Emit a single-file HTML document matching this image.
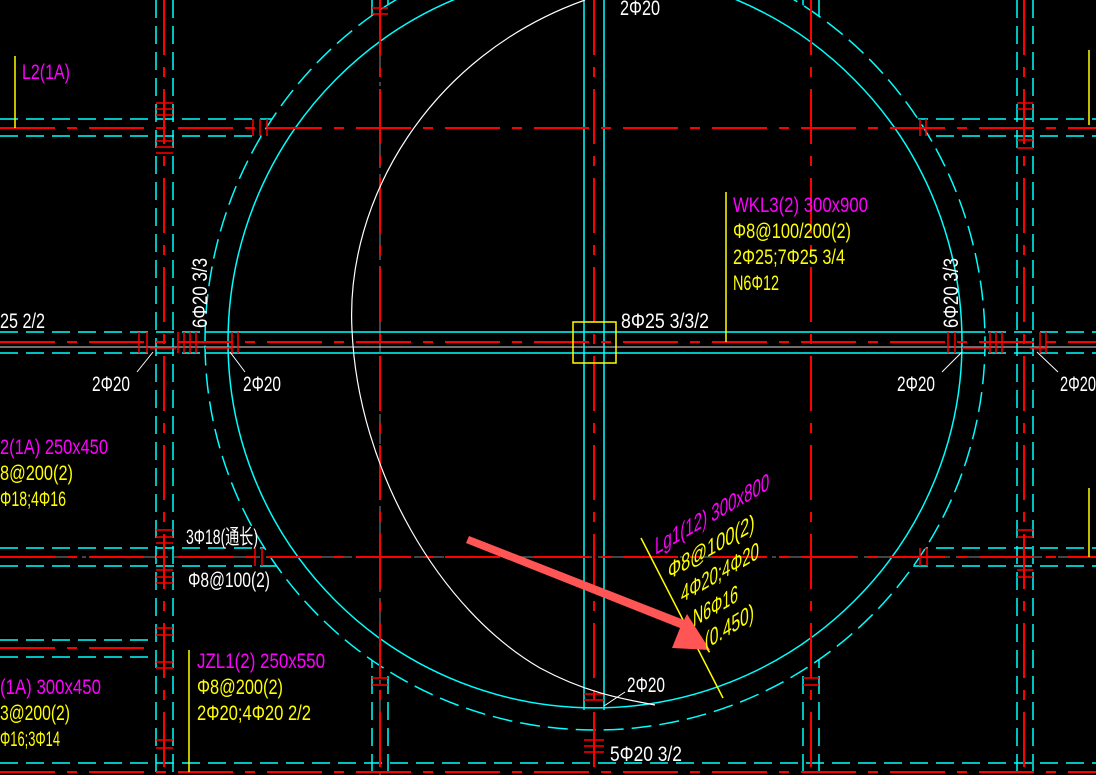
<!DOCTYPE html>
<html><head><meta charset="utf-8"><style>
html,body{margin:0;padding:0;background:#000;overflow:hidden}
svg{display:block}
text{font-family:"Liberation Sans Narrow","Liberation Sans",sans-serif;font-size:21px}
.w{fill:#fff}.y{fill:#ff0}.m{fill:#f0f}
</style></head><body>
<svg width="1096" height="775" viewBox="0 0 1096 775" xmlns="http://www.w3.org/2000/svg">
<rect width="1096" height="775" fill="#000"/>
<defs>
<clipPath id="outside"><path d="M0,0H1096V775H0Z M205,342 A390,398 0 0,1 985,342 A390,388 0 0,1 205,342Z" clip-rule="evenodd"/></clipPath>
</defs>
<g stroke="#888" stroke-width="1" stroke-dasharray="30,6,4,6">
<line x1="380" y1="0" x2="380" y2="775"/>
<line x1="0" y1="557" x2="1096" y2="557"/>
</g>
<line x1="0" y1="347" x2="1096" y2="347" stroke="#ddd" stroke-width="1"/>
<g stroke="#0ff" stroke-width="1.5" stroke-dasharray="18,8" fill="none" clip-path="url(#outside)">
<line x1="156" y1="0" x2="156" y2="775"/><line x1="173" y1="0" x2="173" y2="775"/>
<line x1="372" y1="0" x2="372" y2="775"/><line x1="388" y1="0" x2="388" y2="775"/>
<line x1="803" y1="0" x2="803" y2="775"/><line x1="819" y1="0" x2="819" y2="775"/>
<line x1="1017" y1="0" x2="1017" y2="775"/><line x1="1033" y1="0" x2="1033" y2="775"/>
<line x1="0" y1="119" x2="1096" y2="119"/><line x1="0" y1="136" x2="1096" y2="136"/>
<line x1="0" y1="548" x2="1096" y2="548"/><line x1="0" y1="566" x2="1096" y2="566"/>
<line x1="0" y1="763" x2="1096" y2="763"/>
<line x1="0" y1="640" x2="156" y2="640"/><line x1="0" y1="657" x2="156" y2="657"/>
<line x1="0" y1="332" x2="1096" y2="332"/><line x1="0" y1="353" x2="1096" y2="353"/>
</g>
<g stroke="#0ff" stroke-width="1.5">
<line x1="205" y1="332" x2="985" y2="332"/><line x1="205" y1="353" x2="985" y2="353"/>
<line x1="584" y1="0" x2="584" y2="710"/><line x1="604" y1="0" x2="604" y2="710"/>
</g>
<path d="M205,342 A390,398 0 0,1 985,342 A390,388 0 0,1 205,342Z" fill="none" stroke="#0ff" stroke-width="1.5" stroke-dasharray="20,8"/>
<path d="M228,342 A367,371 0 0,1 962,342 A367,366 0 0,1 228,342Z" fill="none" stroke="#0ff" stroke-width="1.5"/>
<g stroke="#f00" stroke-width="2" stroke-dasharray="55,12,10,12" fill="none">
<line x1="164" y1="0" x2="164" y2="775"/>
<line x1="380" y1="0" x2="380" y2="775"/>
<line x1="594" y1="0" x2="594" y2="775"/>
<line x1="811" y1="0" x2="811" y2="775"/>
<line x1="1024" y1="0" x2="1024" y2="775"/>
<line x1="0" y1="128" x2="1096" y2="128"/>
<line x1="0" y1="342" x2="1096" y2="342"/>
<line x1="0" y1="557" x2="1096" y2="557"/>
<line x1="0" y1="648" x2="156" y2="648"/>
<line x1="0" y1="772" x2="1096" y2="772"/>
</g>
<g stroke="#f00" stroke-width="1.5">
<path d="M156,103H173M156,109H173M156,115H173M156,141H173M156,147H173M156,153H173"/>
<path d="M156,530H173M156,537H173M156,543H173M156,570H173M156,577H173M156,583H173"/>
<path d="M156,628H173M156,635H173M156,662H173M156,668H173M156,740H173M156,748H173"/>
<path d="M253,119V136M260,119V136M267,119V136M920,119V136M926,119V136"/>
<path d="M1017,103H1033M1017,109H1033M1017,140H1033M1017,148H1033M1017,530H1033M1017,537H1033M1017,570H1033M1017,577H1033"/>
<path d="M372,8H388M372,14H388M803,678H819M803,685H819M372,678H388M372,685H388"/>
<path d="M139,332V353M147,332V353M178,332V353M184,332V353M190,332V353M196,332V353M232,332V353M238,332V353"/>
<path d="M948,332V353M955,332V353M990,332V353M996,332V353M1002,332V353M1040,332V353M1046,332V353"/>
<path d="M150,348H176M205,348H232M962,348H990M1030,348H1046"/>
<path d="M255,548V566M262,548V566M920,548V566M927,548V566"/>
<path d="M584,694H604M584,700H604M584,740H604M584,746H604M584,752H604"/>
</g>
<path d="M585,0 C430,55 345,200 352,330 C358,470 440,610 540,668 C590,695 630,700 655,705" fill="none" stroke="#fff" stroke-width="1.2"/>
<rect x="573" y="322" width="43" height="41" fill="none" stroke="#ff0" stroke-width="1.5"/>
<g stroke="#ff0" stroke-width="1.5">
<line x1="726" y1="192" x2="726" y2="342"/>
<line x1="15" y1="56" x2="15" y2="128"/>
<line x1="189" y1="650" x2="189" y2="772"/>
<line x1="1089" y1="488" x2="1089" y2="557"/>
<line x1="1089" y1="50" x2="1089" y2="125"/>
<line x1="641" y1="538" x2="723" y2="698"/>
</g>
<g stroke="#fff" stroke-width="1">
<line x1="137" y1="372" x2="153" y2="352"/>
<line x1="230" y1="352" x2="245" y2="372"/>
<line x1="942" y1="372" x2="962" y2="352"/>
<line x1="1037" y1="352" x2="1058" y2="372"/>
<line x1="604" y1="706" x2="625" y2="692"/>
</g>
<path d="M466,543 L680,628 L672,648 L710,650 L687,614 L684,620 L469,536Z" fill="#f55"/>
<text class="m" x="22" y="79" textLength="48" lengthAdjust="spacingAndGlyphs">L2(1A)</text>
<text class="w" x="620" y="15" textLength="40" lengthAdjust="spacingAndGlyphs">2Φ20</text>
<text class="m" x="733" y="212" textLength="135" lengthAdjust="spacingAndGlyphs">WKL3(2) 300x900</text>
<text class="y" x="733" y="238" textLength="118" lengthAdjust="spacingAndGlyphs">Φ8@100/200(2)</text>
<text class="y" x="733" y="264" textLength="112" lengthAdjust="spacingAndGlyphs">2Φ25;7Φ25 3/4</text>
<text class="y" x="733" y="290" textLength="46" lengthAdjust="spacingAndGlyphs">N6Φ12</text>
<text class="w" x="621" y="328" textLength="88" lengthAdjust="spacingAndGlyphs">8Φ25 3/3/2</text>
<text class="w" x="0" y="328" textLength="45" lengthAdjust="spacingAndGlyphs">25 2/2</text>
<text class="w" x="92" y="391" textLength="38" lengthAdjust="spacingAndGlyphs">2Φ20</text>
<text class="w" x="243" y="391" textLength="38" lengthAdjust="spacingAndGlyphs">2Φ20</text>
<text class="w" x="897" y="391" textLength="38" lengthAdjust="spacingAndGlyphs">2Φ20</text>
<text class="w" x="1060" y="391" textLength="36" lengthAdjust="spacingAndGlyphs">2Φ20</text>
<text class="w" transform="translate(207,328) rotate(-90)" textLength="70" lengthAdjust="spacingAndGlyphs">6Φ20 3/3</text>
<text class="w" transform="translate(958,328) rotate(-90)" textLength="70" lengthAdjust="spacingAndGlyphs">6Φ20 3/3</text>
<text class="m" x="0" y="454" textLength="108" lengthAdjust="spacingAndGlyphs">2(1A) 250x450</text>
<text class="y" x="0" y="480" textLength="73" lengthAdjust="spacingAndGlyphs">8@200(2)</text>
<text class="y" x="0" y="506" textLength="66" lengthAdjust="spacingAndGlyphs">Φ18;4Φ16</text>
<text class="w" x="186" y="544" textLength="72" lengthAdjust="spacingAndGlyphs">3Φ18(通长)</text>
<text class="w" x="188" y="587" textLength="82" lengthAdjust="spacingAndGlyphs">Φ8@100(2)</text>
<text class="m" x="197" y="668" textLength="128" lengthAdjust="spacingAndGlyphs">JZL1(2) 250x550</text>
<text class="y" x="197" y="694" textLength="86" lengthAdjust="spacingAndGlyphs">Φ8@200(2)</text>
<text class="y" x="197" y="720" textLength="114" lengthAdjust="spacingAndGlyphs">2Φ20;4Φ20 2/2</text>
<text class="m" x="0" y="694" textLength="101" lengthAdjust="spacingAndGlyphs">(1A) 300x450</text>
<text class="y" x="0" y="720" textLength="70" lengthAdjust="spacingAndGlyphs">3@200(2)</text>
<text class="y" x="0" y="746" textLength="60" lengthAdjust="spacingAndGlyphs">Φ16;3Φ14</text>
<text class="w" x="627" y="692" textLength="38" lengthAdjust="spacingAndGlyphs">2Φ20</text>
<text class="w" x="610" y="761" textLength="72" lengthAdjust="spacingAndGlyphs">5Φ20 3/2</text>
<g transform="translate(655,555) rotate(-30) skewX(-30)">
<text class="m" x="0" y="0" textLength="132" lengthAdjust="spacingAndGlyphs">Lg1(12) 300x800</text>
</g>
<g transform="translate(668,580) rotate(-30) skewX(-30)">
<text class="y" x="0" y="0" textLength="100" lengthAdjust="spacingAndGlyphs">Φ8@100(2)</text>
</g>
<g transform="translate(681,603) rotate(-30) skewX(-30)">
<text class="y" x="0" y="0" textLength="90" lengthAdjust="spacingAndGlyphs">4Φ20;4Φ20</text>
</g>
<g transform="translate(693,627) rotate(-30) skewX(-30)">
<text class="y" x="0" y="0" textLength="52" lengthAdjust="spacingAndGlyphs">N6Φ16</text>
</g>
<g transform="translate(705,650) rotate(-32) skewX(-30)">
<text class="y" x="0" y="0" textLength="58" lengthAdjust="spacingAndGlyphs">(0.450)</text>
</g>
</svg>
</body></html>
